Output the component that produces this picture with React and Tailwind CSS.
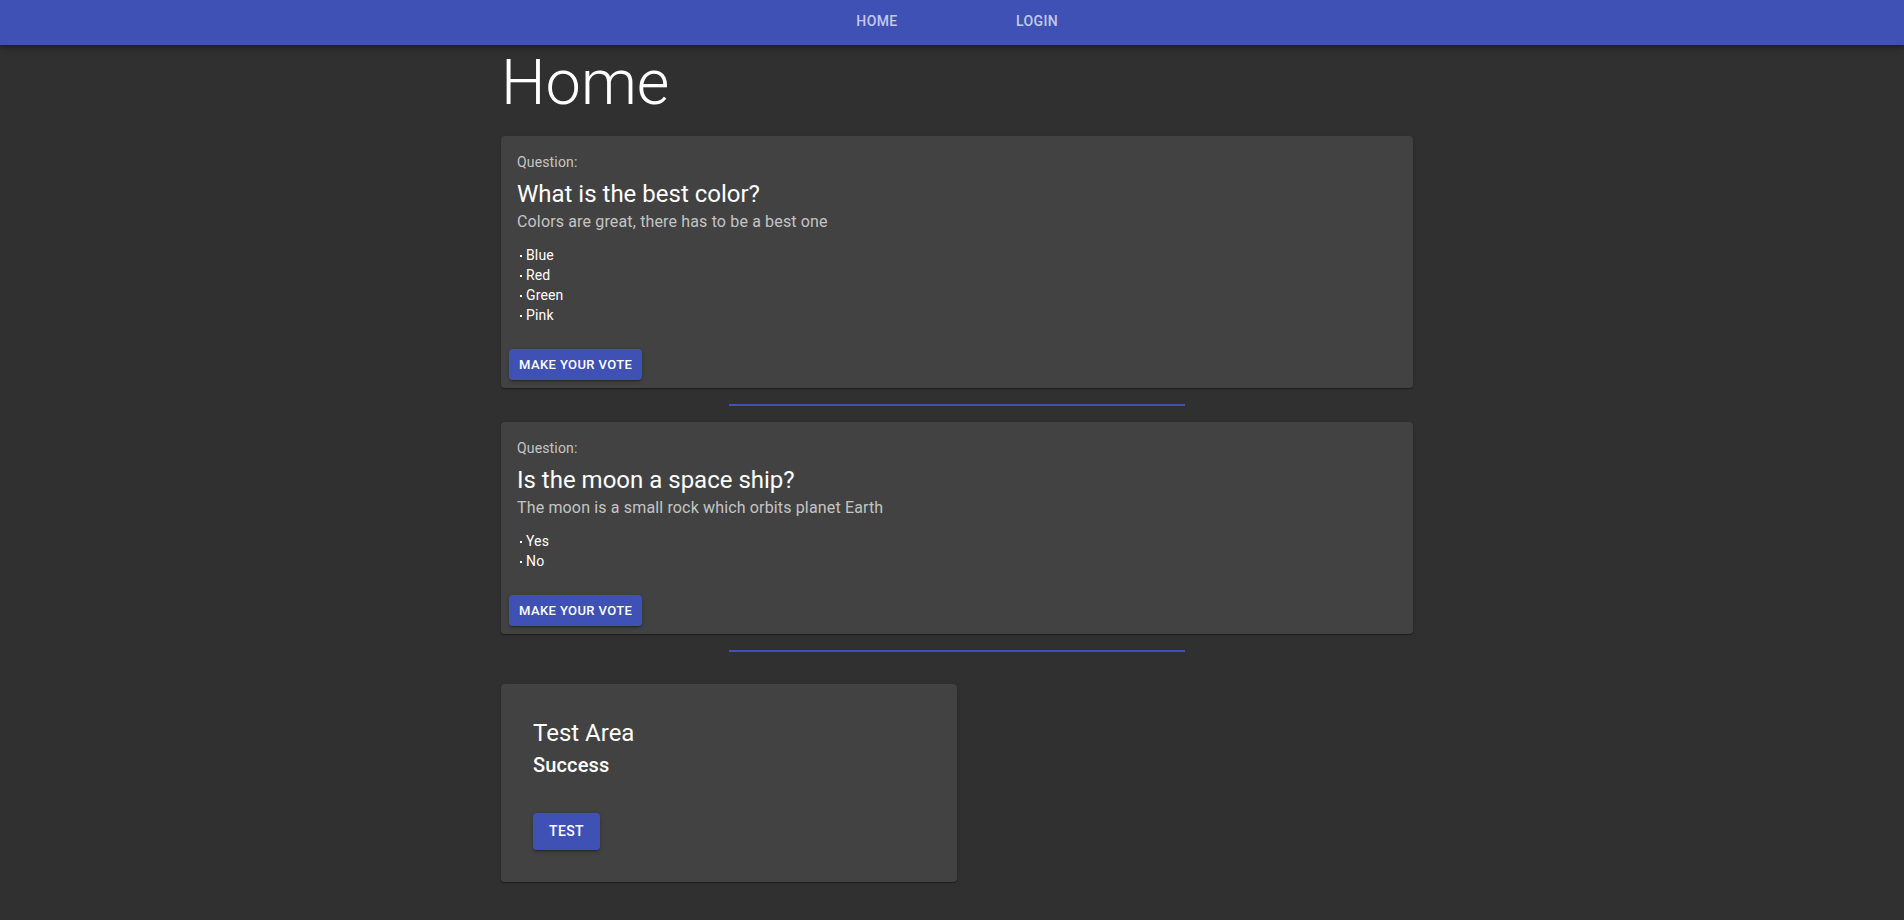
import React from 'react';

const questions = [
  {
    title: 'What is the best color?',
    description: 'Colors are great, there has to be a best one',
    options: ['Blue', 'Red', 'Green', 'Pink'],
  },
  {
    title: 'Is the moon a space ship?',
    description: 'The moon is a small rock which orbits planet Earth',
    options: ['Yes', 'No'],
  },
];

const cardShadow =
  'shadow-[0_2px_1px_-1px_rgba(0,0,0,0.2),0_1px_1px_0_rgba(0,0,0,0.14),0_1px_3px_0_rgba(0,0,0,0.12)]';

function QuestionCard({ q }) {
  return (
    <div className={`bg-[#424242] rounded ${cardShadow}`}>
      <div className="p-4">
        <p className="text-[14px] leading-[20px] tracking-[0.15px] text-white/70 mb-[6px]">Question:</p>
        <h5 className="text-[24px] leading-[32px] text-white">{q.title}</h5>
        <p className="text-[16px] leading-[24px] tracking-[0.15px] text-white/70">{q.description}</p>
        <ul className="mt-[11px]">
          {q.options.map((opt) => (
            <li key={opt} className="flex items-center text-[14px] leading-[20px] tracking-[0.15px] text-white">
              <span className="inline-block w-[2px] h-[2px] bg-white ml-[3px] mr-[4px] mt-[2px]" />
              {opt}
            </li>
          ))}
        </ul>
      </div>
      <div className="p-2">
        <button className="h-[31px] px-[10px] rounded bg-[#3f51b5] text-white text-[13px] font-medium uppercase tracking-[0.4px] leading-[22px] shadow-[0_3px_1px_-2px_rgba(0,0,0,0.2),0_2px_2px_0_rgba(0,0,0,0.14),0_1px_5px_0_rgba(0,0,0,0.12)]">
          Make your vote
        </button>
      </div>
    </div>
  );
}

function Divider() {
  return <div className="w-1/2 mx-auto h-[2px] bg-[#3f51b5] my-4" />;
}

export default function App() {
  return (
    <div className="min-h-screen bg-[#303030] font-['Roboto',sans-serif]">
      <nav className="h-[45px] bg-[#3f51b5] shadow-[0_2px_4px_-1px_rgba(0,0,0,0.2),0_4px_5px_0_rgba(0,0,0,0.14),0_1px_10px_0_rgba(0,0,0,0.12)] relative z-10">
        <div className="pl-[10px] flex justify-center">
          <a className="w-[160px] h-[45px] pb-[3px] flex items-center justify-center text-[14px] font-medium uppercase tracking-[0.4px] text-white/70">
            Home
          </a>
          <a className="w-[160px] h-[45px] pb-[3px] flex items-center justify-center text-[14px] font-medium uppercase tracking-[0.4px] text-white/70">
            Login
          </a>
        </div>
      </nav>

      <div className="pl-[10px] pb-10">
        <div className="mx-auto w-[912px]">
          <h2 className="text-[63px] font-light leading-[75px] text-white">Home</h2>

          <div className="mt-4">
            {questions.map((q) => (
              <div key={q.title}>
                <QuestionCard q={q} />
                <Divider />
              </div>
            ))}
          </div>

          <div className={`mt-8 w-[456px] px-8 pt-[33px] pb-8 bg-[#424242] rounded ${cardShadow}`}>
            <h5 className="text-[24px] leading-[32px] text-white">Test Area</h5>
            <h6 className="text-[20px] leading-[32px] tracking-[0.15px] font-medium text-white">Success</h6>
            <button className="mt-8 h-[37px] px-4 rounded bg-[#3f51b5] text-white text-[14px] font-medium uppercase tracking-[0.4px] shadow-[0_3px_1px_-2px_rgba(0,0,0,0.2),0_2px_2px_0_rgba(0,0,0,0.14),0_1px_5px_0_rgba(0,0,0,0.12)]">
              Test
            </button>
          </div>
        </div>
      </div>
    </div>
  );
}
